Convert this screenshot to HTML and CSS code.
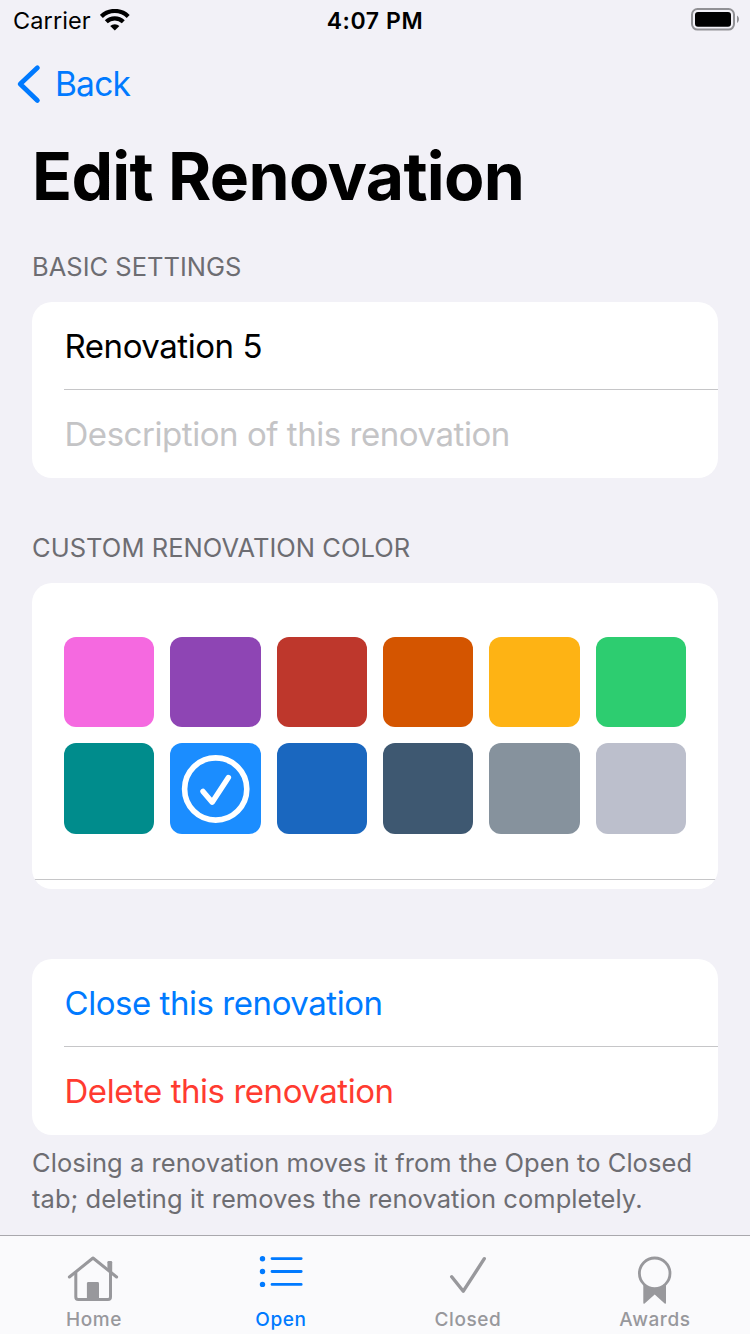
FILE: index.html
```html
<!DOCTYPE html>
<html lang="en">
<head>
<meta charset="utf-8">
<title>Edit Renovation</title>
<link rel="stylesheet" href="styles.css">
</head>
<body>
<div class="screen">
  <header class="status-bar">
    <div class="status-left">
      <span class="carrier">Carrier</span>
      <svg class="wifi" width="30" height="22" viewBox="0 0 30 22" fill="none" stroke="#000" stroke-width="4.2">
        <path d="M1.4 7.4A19.2 19.2 0 0 1 28.2 7.4"/>
        <path d="M6.3 12.8A12.2 12.2 0 0 1 23.3 12.8"/>
        <path d="M10.2 17A6.7 6.7 0 0 1 19.4 17L14.8 21.6Z" fill="#000" stroke="none"/>
      </svg>
    </div>
    <span class="clock">4:07 PM</span>
    <svg class="battery" width="50" height="24" viewBox="0 0 50 24">
      <rect x="2" y="2" width="42" height="20.6" rx="5.5" fill="none" stroke="#919195" stroke-width="2"/>
      <rect x="5" y="5" width="36" height="14.8" rx="3" fill="#000"/>
      <path d="M47 8.6C49.6 10 49.6 14.6 47 16Z" fill="#919195"/>
    </svg>
  </header>
  <nav class="nav-bar">
    <svg width="26" height="40" viewBox="0 0 26 40" fill="none" stroke="#007aff" stroke-width="4.8" stroke-linecap="round" stroke-linejoin="round"><path d="M21.4 3.8L4.2 20L21.4 36.4"/></svg>
    <span class="back">Back</span>
  </nav>
  <main class="content">
    <h1 class="title">Edit Renovation</h1>
    <h2 class="section-title basic">BASIC SETTINGS</h2>
    <section class="card">
      <div class="row name">Renovation 5</div>
      <div class="row placeholder">Description of this renovation</div>
    </section>
    <h2 class="section-title custom">CUSTOM RENOVATION COLOR</h2>
    <section class="card color-card">
      <div class="swatches">
        <div class="swatch pink"></div>
        <div class="swatch purple"></div>
        <div class="swatch red"></div>
        <div class="swatch orange"></div>
        <div class="swatch gold"></div>
        <div class="swatch green"></div>
        <div class="swatch teal"></div>
        <div class="swatch light-blue">
          <svg width="90" height="90" viewBox="0 0 90 90" fill="none" stroke="#fff" stroke-linecap="round" stroke-linejoin="round">
            <circle cx="45.7" cy="46" r="31.1" stroke-width="5.6"/>
            <path d="M33 48.4L42.2 59.2L58.4 34.6" stroke-width="5.4"/>
          </svg>
        </div>
        <div class="swatch dark-blue"></div>
        <div class="swatch midnight"></div>
        <div class="swatch dark-gray"></div>
        <div class="swatch gray"></div>
      </div>
    </section>
    <section class="card actions">
      <div class="row close">Close this renovation</div>
      <div class="row delete">Delete this renovation</div>
    </section>
    <p class="footnote">Closing a renovation moves it from the Open to Closed<br>tab; deleting it removes the renovation completely.</p>
  </main>
  <footer class="tab-bar">
    <div class="tab">
      <svg width="61" height="56" viewBox="0 0 61 56" fill="none" stroke="#98989c" stroke-width="3" stroke-linecap="round" stroke-linejoin="round">
        <path d="M6.4 27L30 8L53.6 27"/>
        <path d="M12.8 22.5V47Q12.8 49.5 15.3 49.5H45Q47.5 49.5 47.5 47V22.5"/>
        <path d="M44.4 19V12.2Q44.4 11 45.6 11H48Q49.2 11 49.2 12.2V23Z" fill="#98989c" stroke="none"/>
        <path d="M23.9 50V33.4Q23.9 32 25.3 32H34.6Q36 32 36 33.4V50Z" fill="#98989c" stroke="none"/>
      </svg>
      <span class="label">Home</span>
    </div>
    <div class="tab active">
      <svg width="61" height="56" viewBox="0 0 61 56" fill="#007aff" stroke="#007aff" stroke-width="2.8" stroke-linecap="round">
        <g stroke="none"><circle cx="12.5" cy="8.7" r="2.7"/><circle cx="12.5" cy="21.5" r="2.7"/><circle cx="12.5" cy="34.4" r="2.7"/></g>
        <path d="M22 8.6H51.2M22 21.5H51.2M22 34.4H51.2"/>
      </svg>
      <span class="label">Open</span>
    </div>
    <div class="tab">
      <svg width="61" height="56" viewBox="0 0 61 56" fill="none" stroke="#98989c" stroke-width="3.4" stroke-linecap="round" stroke-linejoin="round"><path d="M14.7 26.8L26.3 41.2L47.3 8.7"/></svg>
      <span class="label">Closed</span>
    </div>
    <div class="tab">
      <svg width="61" height="56" viewBox="0 0 61 56">
        <path d="M19.3 33H42V52.5Q42 54.5 40.4 53.2L30.7 44.6L20.9 53.2Q19.3 54.5 19.3 52.5Z" fill="#98989c"/>
        <circle cx="30.7" cy="23.3" r="15.3" fill="#fafafc" stroke="#98989c" stroke-width="2.8"/>
      </svg>
      <span class="label">Awards</span>
    </div>
  </footer>
</div>
</body>
</html>
```

FILE: styles.css
```css
* { box-sizing: border-box; }
body { margin: 0; background: #f2f1f7; font-family: Inter, "Liberation Sans", sans-serif; color: #000; }
h1, h2, p { margin: 0; font-weight: 400; }
svg { display: block; flex: none; }
.screen { width: 750px; height: 1334px; display: flex; flex-direction: column; overflow: hidden; white-space: nowrap; }

.status-bar { height: 40px; display: grid; grid-template-columns: 1fr auto 1fr; font-size: 23.5px; line-height: 41px; }
.status-left { display: flex; padding-left: 13px; gap: 9px; }
.carrier { letter-spacing: 0.1px; }
.wifi { margin-top: 9px; }
.clock { font-weight: 600; font-size: 23px; line-height: 43px; letter-spacing: 0.6px; }
.battery { justify-self: end; margin: 7px 10px 0 0; }

.nav-bar { height: 88px; display: flex; align-items: center; padding-left: 16px; gap: 13px; color: #007aff; font-size: 33.5px; letter-spacing: -0.8px; }

.content { flex: none; height: 1107px; padding: 0 32px; }
.title { height: 96px; line-height: 97px; font-size: 66px; font-weight: 700; letter-spacing: -0.68px; }
.section-title { font-size: 25.5px; line-height: 30px; color: #6d6d72; }
.basic { margin-top: 28px; }
.card { margin-top: 20px; height: 176px; background: #fff; border-radius: 20px; overflow: hidden; }
.row { height: 88px; padding-left: 0.5px; margin-left: 32px; font-size: 33px; line-height: 89px; letter-spacing: -0.45px; }
.row:first-child { border-bottom: 1px solid #c6c6c8; }
.placeholder { color: #c4c4c6; }
.custom { margin-top: 55px; letter-spacing: 0.05px; }
.color-card { height: 306px; padding-top: 54px; }
.swatches { height: 243px; padding: 0 32px; display: grid; grid-template-columns: repeat(6, 1fr); grid-auto-rows: 90.33px; gap: 16px; border-bottom: 1px solid #c6c6c8; }
.swatch { border-radius: 12px; }
.pink { background: #f569e0; }
.purple { background: #8e45b4; }
.red { background: #be372c; }
.orange { background: #d45500; }
.gold { background: #feb314; }
.green { background: #2dcd70; }
.teal { background: #008c8c; }
.light-blue { background: #1b8dff; }
.dark-blue { background: #1a67bf; }
.midnight { background: #3e5871; }
.dark-gray { background: #86929d; }
.gray { background: #bcbfcc; }
.actions { margin-top: 70px; }
.close { color: #007aff; }
.delete { color: #ff3b30; }
.footnote { margin-top: 10px; font-size: 25.5px; line-height: 36px; letter-spacing: 0.05px; color: #6d6d72; }

.tab-bar { height: 99px; background: #fafafc; border-top: 1px solid #a9a8ad; display: grid; grid-template-columns: repeat(4, 187px); }
.tab { display: flex; flex-direction: column; align-items: center; padding-top: 14px; color: #98989c; font-size: 19px; font-weight: 500; }
.label { line-height: 28px; padding-left: 1px; letter-spacing: 0.6px; }
.active { color: #007aff; }
```
